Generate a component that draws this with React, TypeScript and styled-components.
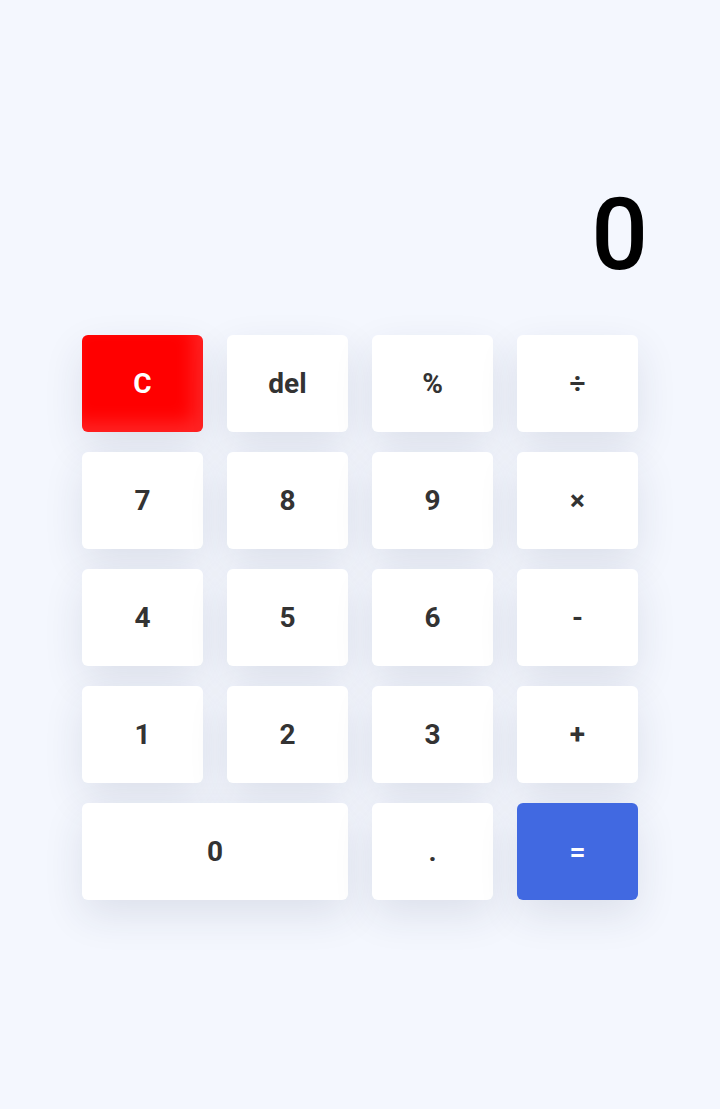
import styled, { createGlobalStyle } from 'styled-components'

const GlobalStyle = createGlobalStyle`
    html, body {
        margin: 0;
        padding: 0;
        background-color: #f4f7fe;
        font-family: Roboto, "Liberation Sans", sans-serif;
    }
`;

const Page = styled.div`
    min-height: 1109px;
    display: flex;
    justify-content: center;
    padding-top: 170px;
    box-sizing: border-box;
`;

const Calculator = styled.div`
    width: 556px;
    display: flex;
    flex-direction: column;
`;

const Display = styled.div`
    text-align: right;
    font-size: 100px;
    font-weight: 500;
    line-height: 130px;
    color: #000;
    margin-right: -10px;
    margin-bottom: 35px;
`;

const Keys = styled.div`
    display: grid;
    grid-template-columns: repeat(4, 121px);
    grid-auto-rows: 97px;
    column-gap: 24px;
    row-gap: 20px;
`;

type Variant = 'plain' | 'clear' | 'equals';

const Key = styled.button<{ $variant?: Variant; $wide?: boolean }>`
    grid-column: ${p => (p.$wide ? 'span 2' : 'auto')};
    border: none;
    border-radius: 6px;
    font-family: Roboto, "Liberation Sans", sans-serif;
    font-size: 28px;
    font-weight: 700;
    cursor: pointer;
    color: ${p => (p.$variant && p.$variant !== 'plain' ? '#fff' : '#333')};
    background-color: ${p =>
        p.$variant === 'clear' ? '#ff0000' : p.$variant === 'equals' ? '#4169e1' : '#fff'};
    box-shadow: ${p =>
        p.$variant === 'clear'
            ? 'inset -10px -10px 18px rgba(255, 255, 255, 0.14), 0 15px 40px rgba(40, 50, 80, 0.11)'
            : '0 15px 40px rgba(40, 50, 80, 0.11)'};
`;

const keys: { label: string; variant?: Variant; wide?: boolean }[] = [
    { label: 'C', variant: 'clear' },
    { label: 'del' },
    { label: '%' },
    { label: '÷' },
    { label: '7' },
    { label: '8' },
    { label: '9' },
    { label: '×' },
    { label: '4' },
    { label: '5' },
    { label: '6' },
    { label: '-' },
    { label: '1' },
    { label: '2' },
    { label: '3' },
    { label: '+' },
    { label: '0', wide: true },
    { label: '.' },
    { label: '=', variant: 'equals' },
];

export default function App() {
    return (
        <Page>
            <GlobalStyle />
            <Calculator>
                <Display>0</Display>
                <Keys>
                    {keys.map(k => (
                        <Key key={k.label} $variant={k.variant} $wide={k.wide}>
                            {k.label}
                        </Key>
                    ))}
                </Keys>
            </Calculator>
        </Page>
    )
}
